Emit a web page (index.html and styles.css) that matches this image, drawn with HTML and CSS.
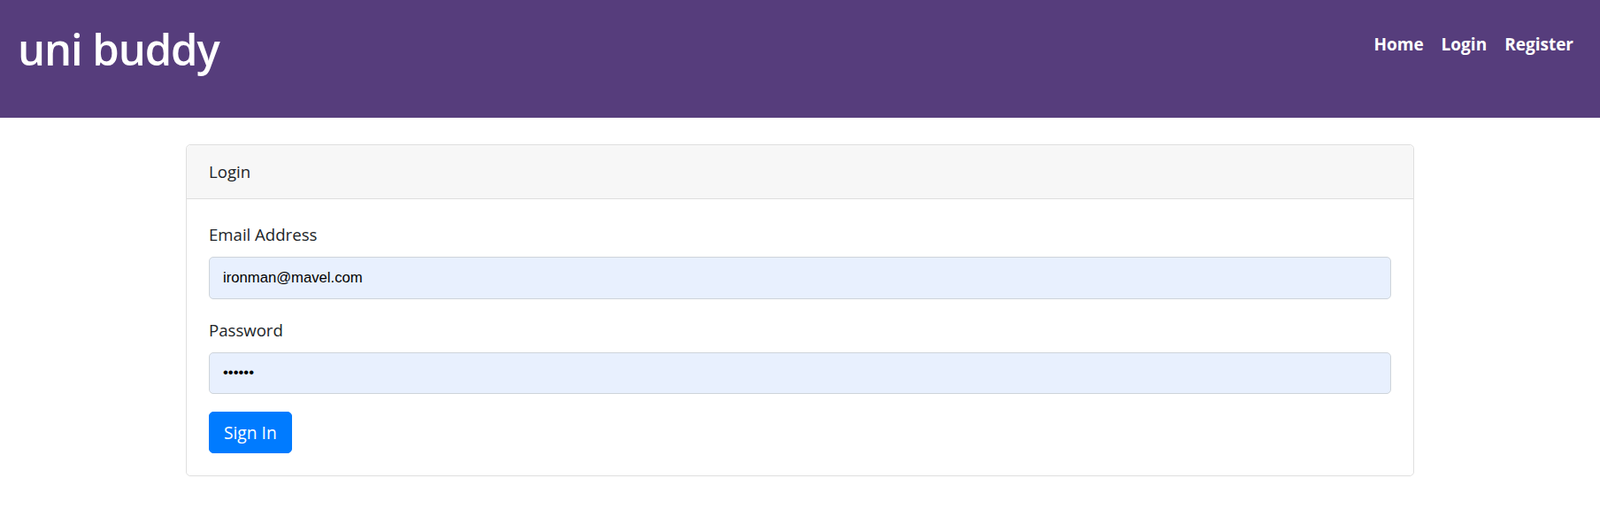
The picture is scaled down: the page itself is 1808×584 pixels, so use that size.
FILE: index.html
```html
<!DOCTYPE html>
<html lang="en">
<head>
<meta charset="utf-8">
<title>uni buddy</title>
<link rel="stylesheet" href="styles.css">
</head>
<body>
<nav class="navbar">
  <a class="brand" href="#">uni buddy</a>
  <ul class="nav">
    <li><a class="nav-link" href="#">Home</a></li>
    <li><a class="nav-link" href="#">Login</a></li>
    <li><a class="nav-link" href="#">Register</a></li>
  </ul>
</nav>
<main class="container">
  <section class="card">
    <div class="card-header">Login</div>
    <form class="card-body">
      <div class="form-group">
        <label class="label" for="email">Email Address</label>
        <input class="form-control" id="email" type="email" value="ironman@mavel.com">
      </div>
      <div class="form-group">
        <label class="label" for="password">Password</label>
        <input class="form-control" id="password" type="password" value="123456">
      </div>
      <button class="btn" type="button">Sign In</button>
    </form>
  </section>
</main>
</body>
</html>
```

FILE: styles.css
```css
* { box-sizing: border-box; }
html, body { margin: 0; padding: 0; }
body {
  font-family: "Open Sans", "Noto Sans", sans-serif;
  font-size: 18.6px;
  line-height: 30px;
  color: #212529;
  background: #fff;
}
.navbar {
  background: #563d7c;
  height: 133px;
  padding: 10px 20px;
  display: flex;
  justify-content: space-between;
  align-items: flex-start;
}
.brand {
  color: #fff;
  text-decoration: none;
  font-size: 49px;
  font-weight: 600;
  line-height: 78px;
  letter-spacing: -1.1px;
  padding-top: 6px;
  display: block;
}
.nav {
  list-style: none;
  margin: 15px 0 0;
  padding: 0;
  display: flex;
}
.nav-link {
  display: block;
  padding: 10px 10px;
  color: #fff;
  text-decoration: none;
  font-weight: 700;
  font-size: 19px;
  line-height: 30px;
}
.container {
  width: 1388px;
  margin: 30px auto 0;
}
.card {
  border: 1px solid #dfdfdf;
  border-radius: 5px;
  background: #fff;
}
.card-header {
  background: #f7f7f7;
  border-bottom: 1px solid #dfdfdf;
  padding: 15px 25px;
  border-radius: 5px 5px 0 0;
  height: 61px;
}
.card-body {
  padding: 25px 25px;
  margin: 0;
}
.form-group {
  margin-bottom: 20px;
}
.label {
  display: block;
  margin-bottom: 10px;
  line-height: 30px;
}
.form-control {
  display: block;
  width: 100%;
  height: 47.5px;
  padding: 7.5px 15px;
  font-family: "Liberation Sans", Arial, sans-serif;
  font-size: 16.67px;
  color: #000;
  background: #e8f0fe;
  border: 1px solid #ced4da;
  border-radius: 5px;
  outline: none;
}
.btn {
  display: block;
  height: 47px;
  padding: 7.5px 16px;
  font-family: "Open Sans", "Noto Sans", sans-serif;
  font-size: 19.2px;
  line-height: 30px;
  color: #fff;
  background: #007bff;
  border: 1px solid #007bff;
  border-radius: 5px;
  cursor: pointer;
}
```
